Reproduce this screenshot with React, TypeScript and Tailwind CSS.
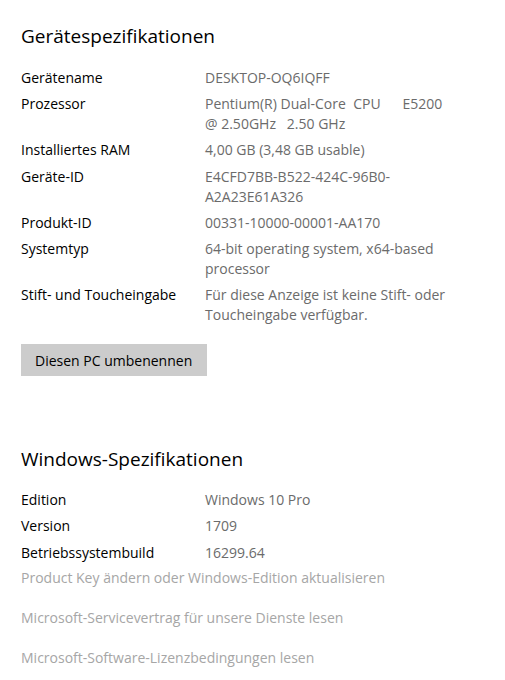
const deviceRows: { label: string; lines: string[] }[] = [
  { label: "Gerätename", lines: ["DESKTOP-OQ6IQFF"] },
  { label: "Prozessor", lines: ["Pentium(R) Dual-Core  CPU      E5200", "@ 2.50GHz   2.50 GHz"] },
  { label: "Installiertes RAM", lines: ["4,00 GB (3,48 GB usable)"] },
  { label: "Geräte-ID", lines: ["E4CFD7BB-B522-424C-96B0-", "A2A23E61A326"] },
  { label: "Produkt-ID", lines: ["00331-10000-00001-AA170"] },
  { label: "Systemtyp", lines: ["64-bit operating system, x64-based", "processor"] },
  { label: "Stift- und Toucheingabe", lines: ["Für diese Anzeige ist keine Stift- oder", "Toucheingabe verfügbar."] },
];

const windowsRows: { label: string; lines: string[] }[] = [
  { label: "Edition", lines: ["Windows 10 Pro"] },
  { label: "Version", lines: ["1709"] },
  { label: "Betriebssystembuild", lines: ["16299.64"] },
];

const links = [
  "Product Key ändern oder Windows-Edition aktualisieren",
  "Microsoft-Servicevertrag für unsere Dienste lesen",
  "Microsoft-Software-Lizenzbedingungen lesen",
];

function SpecRows({ rows }: { rows: { label: string; lines: string[] }[] }) {
  return (
    <div className="flex flex-col gap-[6.2px]">
      {rows.map((r) => (
        <div key={r.label} className="flex text-[14px] leading-[20px]">
          <div className="w-[184px] shrink-0 text-black">{r.label}</div>
          <div className="text-[#6b6b6b]">
            {r.lines.map((l) => (
              <div key={l} className="whitespace-pre">
                {l}
              </div>
            ))}
          </div>
        </div>
      ))}
    </div>
  );
}

export default function App() {
  return (
    <div className="min-h-[680px] w-[505px] bg-white pl-[21px] pt-[22px] font-['Segoe_UI','Open_Sans',sans-serif]">
      <h2 className="text-[19px] leading-[28px] text-black">Gerätespezifikationen</h2>
      <div className="mt-[18px]">
        <SpecRows rows={deviceRows} />
      </div>
      <button className="mt-[19px] h-[32px] w-[186px] bg-[#cccccc] pl-[14px] text-left text-[14px] text-black">
        Diesen PC umbenennen
      </button>

      <h2 className="mt-[69px] text-[19px] leading-[28px] text-black">Windows-Spezifikationen</h2>
      <div className="mt-[17px]">
        <SpecRows rows={windowsRows} />
      </div>
      <div className="mt-[5px] flex flex-col gap-[20px]">
        {links.map((l) => (
          <div key={l} className="text-[14px] leading-[20px] text-[#a6a6a6]">
            {l}
          </div>
        ))}
      </div>
    </div>
  );
}
